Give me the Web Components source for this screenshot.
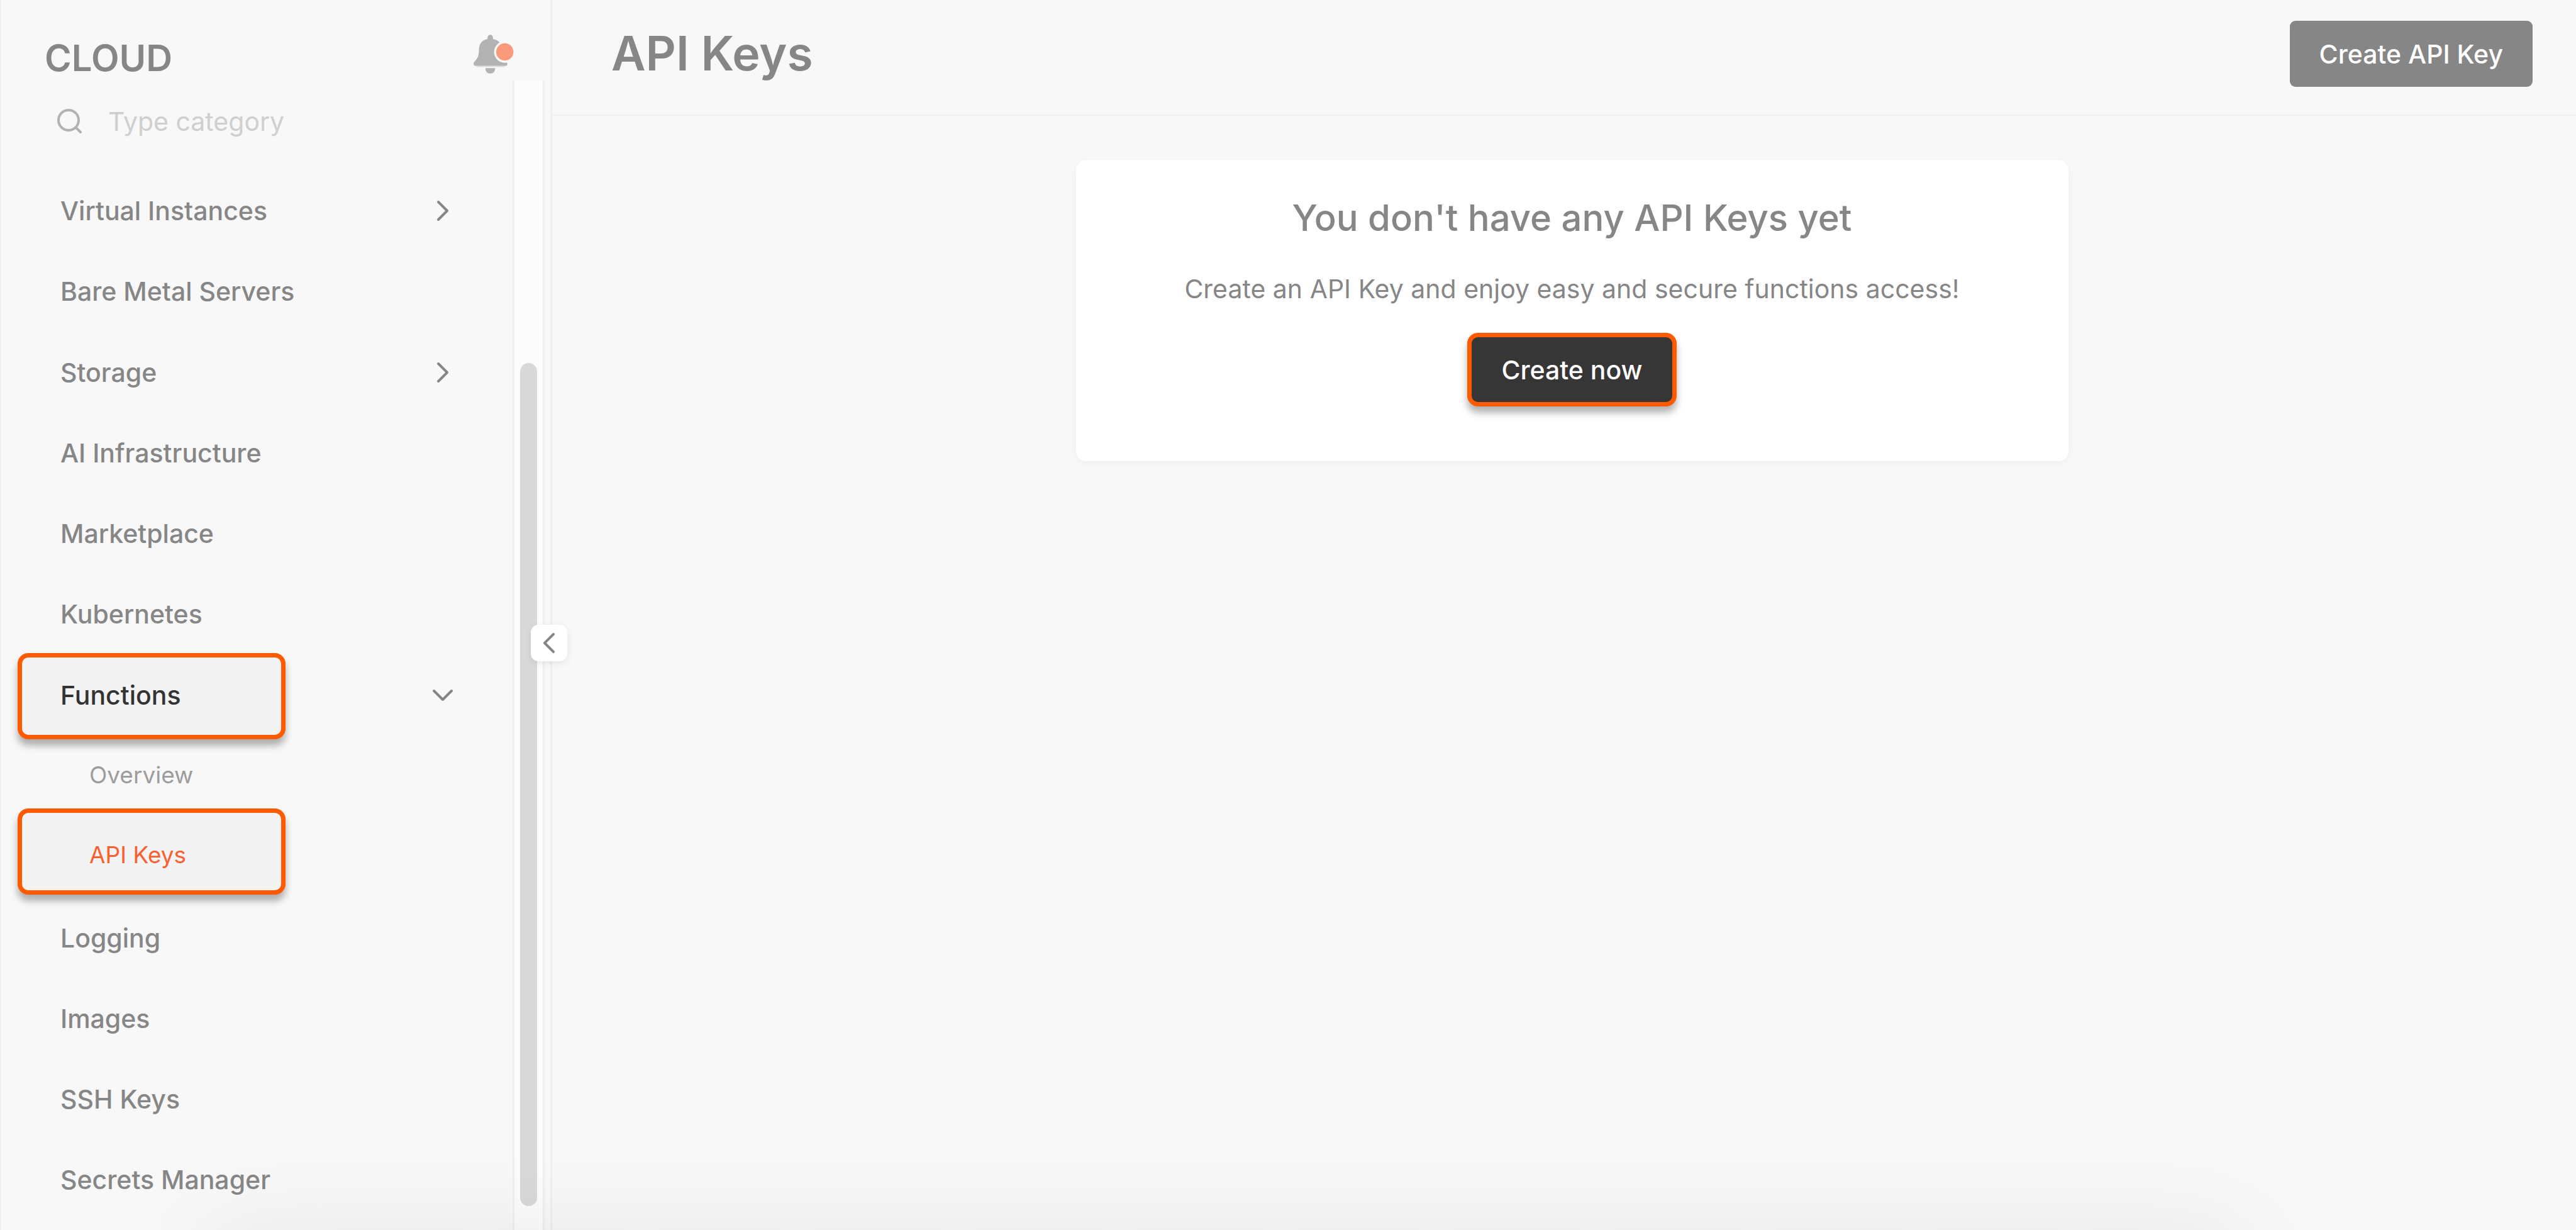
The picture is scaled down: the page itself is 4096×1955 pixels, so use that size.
<!DOCTYPE html>
<html lang="en">
<head>
<meta charset="utf-8">
<title>API Keys</title>
<style>
  body { margin: 0; background: #f8f8f8; font-family: Inter, "Open Sans", sans-serif; color: #868686; }
</style>
</head>
<body>
<cloud-app></cloud-app>
<script>
const define = (name, html) => {
  const tpl = document.createElement('template');
  tpl.innerHTML = html;
  customElements.define(name, class extends HTMLElement {
    constructor() {
      super();
      this.attachShadow({ mode: 'open' }).append(tpl.content.cloneNode(true));
    }
  });
};

define('chevron-icon', `
<style>
  :host { display: inline-flex; width: 40px; height: 40px; }
  :host([direction="left"]) svg { transform: rotate(180deg); }
  svg { width: 100%; height: 100%; fill: none; stroke: #868686; stroke-width: 4; stroke-linecap: round; stroke-linejoin: round; }
</style>
<svg viewBox="0 0 40 40" aria-hidden="true"><path d="M13 6 L27 20 L13 34"/></svg>`);

define('bell-button', `
<style>
  :host { display: block; }
  button { display: block; padding: 0; border: 0; background: none; cursor: pointer; }
  svg { display: block; width: 66px; height: 62px; }
</style>
<button type="button" aria-label="Notifications">
<svg viewBox="0 0 77 72" aria-hidden="true">
  <path fill="#b2b2b2" d="M26 8V5a5 5 0 0 1 10 0v3C48 10 53 18 53 28C53 40 56 45 61 50C64 54 63 58 59 58H4C0 58-1 54 1 51C7 44 10 40 10 28C10 17 16 10 26 8Z"/>
  <path fill="#dedede" d="M4 58H59L57 60H6Z"/>
  <path fill="#b2b2b2" d="M22 62H40C40 68 37 72 31 72C25 72 22 68 22 62Z"/>
  <circle cx="58" cy="32" r="20" fill="#f8f8f8"/>
  <circle cx="58" cy="32" r="16" fill="#fa9a7b"/>
</svg>
</button>`);

define('search-field', `
<style>
  :host { display: block; }
  label { display: flex; align-items: center; gap: 40px; }
  svg { flex: none; width: 42px; height: 42px; fill: none; stroke: #b2b2b2; stroke-width: 4; stroke-linecap: round; }
  input { flex: 1; min-width: 0; height: 60px; padding: 0; border: 0; outline: 0; background: none; color: #868686; font: 400 41px/60px Inter, sans-serif; }
  input::placeholder { color: #cfcfcf; opacity: 1; }
</style>
<label>
  <svg viewBox="0 0 42 42" aria-hidden="true"><circle cx="19" cy="19" r="16"/><path d="M31 31 L38 38"/></svg>
  <input type="text" placeholder="Type category" aria-label="Type category">
</label>`);

define('nav-item', `
<style>
  :host { display: block; --row: 128px; }
  :host([expandable]) { --row: 129px; }
  a { position: relative; display: flex; align-items: center; justify-content: space-between; height: var(--row); padding: 0 91px 0 68px; font-size: 41px; font-weight: 500; color: inherit; text-decoration: none; }
  span { position: relative; }
  chevron-icon { display: none; }
  :host([expandable]) chevron-icon { display: inline-flex; }
  :host([open]) chevron-icon { transform: rotate(90deg); }
  :host([sub]) { --row: 127px; }
  :host([sub]) a { font-size: 37px; font-weight: 400; padding-left: 114px; color: #9c9c9c; }
  :host([active]) a { color: #333; }
  :host([sub][active]) a { color: #f9602f; }
  :host([marked]) a::before { content: ""; position: absolute; left: 0; top: -2px; width: 426px; height: 137px; box-sizing: border-box; border: 7px solid #ff5a00; border-radius: 17px; background: #f3f3f3; box-shadow: 0 10px 12px rgba(0,0,0,.3); }
  :host([sub][marked]) a::before { top: -10px; }
</style>
<a href="#"><span><slot></slot></span><chevron-icon></chevron-icon></a>`);

define('side-bar', `
<style>
  :host { display: grid; grid-template-rows: 127px 1fr; grid-template-columns: minmax(0, 1fr); width: 878px; box-sizing: border-box; border-left: 2px solid #efefef; border-right: 3px solid #f0f0f0; position: relative; }
  header { display: flex; justify-content: space-between; align-items: flex-start; padding: 55px 56px 0 69px; }
  .brand { font-size: 58px; line-height: 74px; font-weight: 600; }
  .body { display: flex; min-height: 0; }
  .scroll { flex: 1; min-width: 0; overflow: hidden; }
  search-field { padding: 36px 60px 0 88px; }
  nav { padding: 47px 0 0 26px; }
  .group { margin-top: -1px; padding-bottom: 5px; }
  .track { flex: none; width: 51px; box-sizing: border-box; margin-right: 9px; border: solid #f0f0f0; border-width: 0 3px; background: #fcfcfc; display: flex; justify-content: center; align-items: flex-start; padding-top: 450px; }
  .thumb { width: 27px; height: 1340px; border-radius: 14px; background: #d9d9d9; }
  .collapse { position: absolute; right: -27px; top: 993px; width: 58px; height: 58px; display: flex; align-items: center; justify-content: center; padding: 0; border: 0; border-radius: 12px; background: #fff; box-shadow: 0 3px 12px rgba(0,0,0,.09); }
</style>
<header><div class="brand">CLOUD</div><bell-button></bell-button></header>
<div class="body">
  <div class="scroll">
    <search-field></search-field>
    <nav>
      <nav-item expandable>Virtual Instances</nav-item>
      <nav-item>Bare Metal Servers</nav-item>
      <nav-item expandable>Storage</nav-item>
      <nav-item>AI Infrastructure</nav-item>
      <nav-item>Marketplace</nav-item>
      <nav-item>Kubernetes</nav-item>
      <nav-item expandable open active marked>Functions</nav-item>
      <div class="group">
        <nav-item sub>Overview</nav-item>
        <nav-item sub active marked>API Keys</nav-item>
      </div>
      <nav-item>Logging</nav-item>
      <nav-item>Images</nav-item>
      <nav-item>SSH Keys</nav-item>
      <nav-item>Secrets Manager</nav-item>
    </nav>
  </div>
  <div class="track"><div class="thumb"></div></div>
</div>
<button class="collapse" type="button" aria-label="Collapse menu"><chevron-icon direction="left"></chevron-icon></button>`);

define('ui-button', `
<style>
  :host { display: inline-block; }
  button { display: block; height: 105px; padding: 0 47px; border: 0; border-radius: 9px; background: #868686; color: #fff; font: 500 41px/50px Inter, sans-serif; cursor: pointer; }
  :host([marked]) button { height: 117px; border: 7px solid #ff5a00; border-radius: 17px; background: #363636; box-shadow: 0 10px 12px rgba(0,0,0,.3); }
</style>
<button type="button"><slot></slot></button>`);

define('page-header', `
<style>
  :host { display: flex; justify-content: space-between; align-items: flex-start; height: 184px; box-sizing: border-box; padding: 33px 69px 0 94px; border-bottom: 2px solid #f0f0f0; }
  h1 { margin: 0; font-size: 75px; line-height: 104px; font-weight: 600; }
</style>
<h1><slot></slot></h1><slot name="action"></slot>`);

define('empty-card', `
<style>
  :host { display: flex; flex-direction: column; align-items: center; box-sizing: border-box; width: 1578px; max-width: 100%; padding: 52px 60px 87px; border-radius: 16px; background: #fff; box-shadow: 0 4px 12px rgba(0,0,0,.04); text-align: center; }
  h2 { margin: 0; font-size: 58px; line-height: 80px; font-weight: 500; }
  p { margin: 43px 0 40px; font-size: 41px; line-height: 60px; font-weight: 400; }
</style>
<h2><slot name="title"></slot></h2>
<p><slot></slot></p>
<slot name="action"></slot>`);

define('cloud-app', `
<style>
  :host { display: grid; grid-template-columns: auto 1fr; height: 100vh; position: relative; overflow: hidden; }
  .content { display: flex; justify-content: center; padding: 70px 69px 0 94px; }
  .shade { position: absolute; left: 8%; right: 13%; top: 100%; height: 100px; border-radius: 40px; box-shadow: 0 20px 150px rgba(0,0,0,.1); pointer-events: none; }
</style>
<side-bar></side-bar>
<main>
  <page-header>API Keys<ui-button slot="action">Create API Key</ui-button></page-header>
  <div class="content">
    <empty-card>
      <span slot="title">You don't have any API Keys yet</span>
      Create an API Key and enjoy easy and secure functions access!
      <ui-button slot="action" marked>Create now</ui-button>
    </empty-card>
  </div>
</main>
<div class="shade"></div>`);
</script>
</body>
</html>
